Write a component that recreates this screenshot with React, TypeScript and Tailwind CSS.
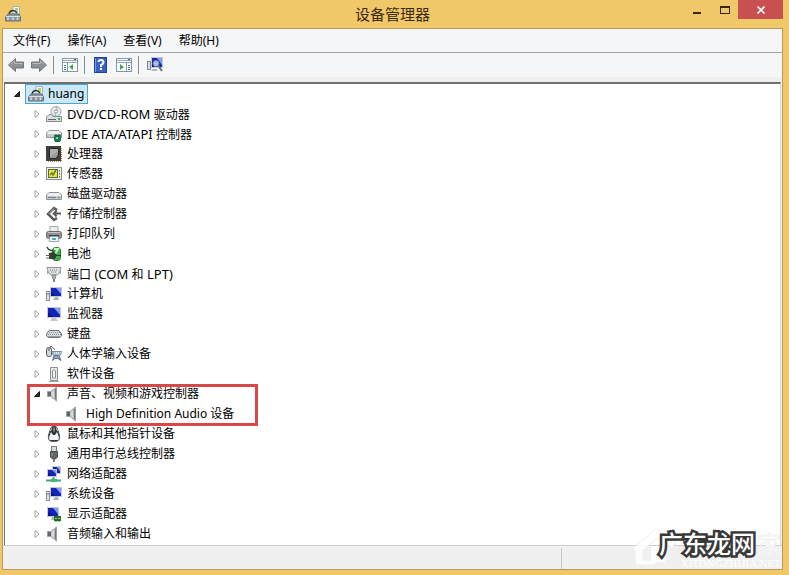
import React, { useState } from "react";

type IconName =
  | "computer" | "disc" | "ide" | "cpu" | "sensor" | "disk" | "storage" | "printer"
  | "battery" | "port" | "pc" | "monitor" | "keyboard" | "hid" | "software" | "speaker"
  | "mouse" | "usb" | "network" | "display";

function Screen({ x = 0, y = 0, w = 12, h = 9 }: { x?: number; y?: number; w?: number; h?: number }) {
  return (
    <g>
      <rect x={x} y={y} width={w} height={h} fill="#c3c9d0" />
      <rect x={x + 1} y={y + 1} width={w - 2} height={h - 2} fill="#1425b4" />
      <path d={`M${x + w / 2} ${y + 1}H${x + w - 1}V${y + h - 3}Z`} fill="#7f9cf0" />
      <path d={`M${x + 1} ${y + h - 1}V${y + h / 2}L${x + w / 2} ${y + h - 1}Z`} fill="#0b1587" />
    </g>
  );
}

function DeviceIcon({ name }: { name: IconName }) {
  const art: Record<IconName, React.ReactNode> = {
    computer: (
      <g>
        <path d="M8 .5H14.500V8H8Z" fill="#f2f5f7" stroke="#a9b4ba" />
        <rect x="10" y="2" width="3" height="4" fill="#b4cf74" />
        <path d="M4 8C5 4 9 3 12 7" fill="none" stroke="#303438" strokeWidth="1.500" />
        <path d="M3 8H14L15.500 11V15H.5V11Z" fill="#8b969d" stroke="#66727a" />
        <path d="M1 10.500H15" stroke="#dce3e7" />
        <path d="M3 11.500V14M8 11.500V14M12.500 11.500V14" stroke="#d7e5e9" strokeWidth="1.500" />
      </g>
    ),
    disc: (
      <g>
        <circle cx="10" cy="5.500" r="5" fill="#e7eaec" stroke="#9aa1a6" />
        <path d="M10 1L11.500 4.500M10 10L8.500 7" stroke="#a5adb3" />
        <circle cx="10" cy="5.500" r="1.500" fill="#fff" stroke="#8b9398" />
        <path d="M3 8.500L5 8.500L7 10.500H15.500V15.500H.5V11Z" fill="#dcdfe1" stroke="#85898d" />
        <path d="M2 13.500H10" stroke="#606468" />
        <rect x="12" y="12" width="2" height="2" fill="#35bd49" />
      </g>
    ),
    ide: (
      <g>
        <path d="M3 4.500H13L15.500 7V11.500H.5V7Z" fill="#eceeef" stroke="#8e9296" />
        <path d="M1 8H15V11H1Z" fill="#c6c9cc" />
        <rect x="8" y="9" width="7" height="6" fill="#187f51" />
        <path d="M10 8V10H13V8M9 15.500H14" fill="none" stroke="#1c533b" />
        <rect x="10" y="11" width="2" height="2" fill="#7ac9a0" />
      </g>
    ),
    cpu: (
      <g>
        <path d="M2 15.500H15M15.500 2V15" fill="none" stroke="#c4914b" strokeDasharray="1 1" />
        <rect x="0" y="0" width="15" height="15" fill="#404040" />
        <path d="M3.500 2.500H12.500V9L10 12.500H3.500Z" fill="#9a9a9a" stroke="#262626" />
        <path d="M4 3H12V5L4 11Z" fill="#b0b0b0" />
      </g>
    ),
    sensor: (
      <g>
        <rect x=".5" y="1.500" width="15" height="12" fill="#eeeee8" stroke="#8b8f8a" />
        <rect x="2.500" y="3.500" width="9" height="8" fill="#e4e43a" stroke="#5d684c" />
        <path d="M4 9L6 7L7 9L10 4" fill="none" stroke="#66803a" strokeWidth="1.500" />
        <path d="M13.500 4V5.500M13.500 7V8.500M13.500 10V11.500" stroke="#5c635e" />
      </g>
    ),
    disk: (
      <g>
        <path d="M3 6.500H13L15.500 9V13.500H.5V9Z" fill="#eceeef" stroke="#8e9296" />
        <path d="M1 10H15V13H1Z" fill="#c6c9cc" />
        <path d="M2 11.500H10" stroke="#7b7f83" />
        <rect x="12" y="11" width="2" height="1" fill="#35bd49" />
      </g>
    ),
    storage: (
      <g fill="none" stroke="#58595b">
        <path d="M11 4L8 2L2 8L8 14L11 12" strokeWidth="2.500" />
        <path d="M15 7.500H8L10.500 4.500M8 7.500L10.500 10.500" strokeWidth="2" />
        <path d="M2.500 8L8 2.500" stroke="#b3b5b6" />
      </g>
    ),
    printer: (
      <g>
        <path d="M4 .5H12V6H4Z" fill="#edf0f2" stroke="#a6a9ac" />
        <rect x=".5" y="5.500" width="15" height="7" rx="2" fill="#8f9397" stroke="#676b6f" />
        <path d="M2 6.500H14" stroke="#c4c8cc" />
        <rect x="3" y="9" width="10" height="2" fill="#3d4144" />
        <path d="M4 10.500H12L13 15.500H3Z" fill="#f3f5f6" stroke="#a0a4a7" />
        <path d="M6 13H10" stroke="#49aebe" strokeWidth="2" />
      </g>
    ),
    battery: (
      <g>
        <rect x="6.500" y="1.500" width="8" height="13" rx="3" fill="#3cb44c" stroke="#2c7338" />
        <path d="M8 3H12L9 8" stroke="#c6f2be" strokeWidth="2" fill="none" />
        <path d="M1 1C3 6 5 3 8 6" fill="none" stroke="#384b35" strokeWidth="1.500" />
        <path d="M3 7L8 6L11 9L9 13H3Z" fill="#35412e" />
        <path d="M0 9.500H4M0 12H4" stroke="#6d683c" />
        <path d="M10 9.500H15" stroke="#263b24" />
      </g>
    ),
    port: (
      <g>
        <path d="M1 1.500H15L13.500 7L10.500 9H5.500L2.500 7Z" fill="#dce0e1" stroke="#8d9598" />
        <path d="M4 4H12M5 6H11" stroke="#737c80" strokeDasharray="1 1" />
        <path d="M1.500 3V8M14.500 3V8" stroke="#a0a7a9" />
        <path d="M6 9H10L9 13H7Z" fill="#b4babc" stroke="#7f888b" />
        <path d="M8 13V16" stroke="#7f888b" strokeWidth="2" />
      </g>
    ),
    pc: (
      <g>
        <Screen x={4} y={1} w={12} h={10} />
        <path d="M9 11H12L13 14H7Z" fill="#aeb3b8" />
        <rect x=".5" y="5.500" width="3" height="9" fill="#e1e3e6" stroke="#888d93" />
        <path d="M1 8H3" stroke="#6b7b6b" />
      </g>
    ),
    monitor: (
      <g>
        <Screen x={1} y={1} w={14} h={11} />
        <path d="M6 12H10L12 15H4Z" fill="#c3c8cc" />
      </g>
    ),
    keyboard: (
      <g>
        <path d="M3 4.500H13L15.500 8V10L13.500 11.500H2.500L.5 10V8Z" fill="#d8dadc" stroke="#6f7478" />
        <path d="M3 6.500H14M2 8.500H15" stroke="#868b8f" strokeDasharray="1 1" />
        <path d="M2 10.500H14" stroke="#9a9ea2" />
      </g>
    ),
    hid: (
      <g>
        <rect x=".5" y="1.500" width="5" height="9" rx="2" fill="#d3d6d9" stroke="#555d63" />
        <path d="M3 2V5M4 1C7-1 7 4 9 3" stroke="#4e565c" fill="none" />
        <path d="M6 5.500H15.500L14.500 9H7Z" fill="#e3ebf4" stroke="#7b8795" />
        <path d="M7 7H15" stroke="#5879a0" strokeDasharray="1 1" />
        <path d="M6.500 14.500L8 9.500H13L15 14.500L12 12.500H9Z" fill="#8aa6c7" stroke="#577391" />
      </g>
    ),
    software: (
      <g>
        <path d="M4.500 1.500H11.500V14.500H4.500Z" fill="#e7eae8" stroke="#8b918d" />
        <path d="M6.500 12V5Q8 2 9.500 5V12Z" fill="#f8faf8" stroke="#83908a" />
        <path d="M3 15.500H13" stroke="#a3a8a5" />
      </g>
    ),
    speaker: (
      <g>
        <path d="M1.500 5.500H5L10.500 1V15L5 10.500H1.500Z" fill="#b5b9bd" stroke="#9a9fa3" />
        <path d="M2 6H5V10H2Z" fill="#60666c" />
        <path d="M9.500 3V13" stroke="#6c747b" />
        <path d="M5.500 6L8 4V12L5.500 10Z" fill="#d5d8da" />
      </g>
    ),
    mouse: (
      <g>
        <path d="M5 1.500C6 0 10 0 11 1.500L13.500 9C14.500 16 10 15.500 8 15.500S1.500 16 2.500 9Z" fill="#34373a" stroke="#575c60" />
        <path d="M5 6L3.500 10C2 15 5 14 8 14S14 15 12.500 10L11 6L9 9H7Z" fill="#f1f2f3" />
        <path d="M5.500 2L4.500 5M10.500 2L11.500 5" stroke="#d5d7d9" />
        <rect x="7" y="1" width="2" height="5" fill="#c9cccf" stroke="#333638" />
      </g>
    ),
    usb: (
      <g>
        <rect x="5.500" y=".5" width="5" height="5" fill="#dadddf" stroke="#777b7e" />
        <path d="M4.500 5.500H11.500V11L9.500 13H6.500L4.500 11Z" fill="#64686b" stroke="#4a4d50" />
        <path d="M6 7V10" stroke="#969a9d" />
        <path d="M8 13V16" stroke="#797d80" strokeWidth="2" />
      </g>
    ),
    network: (
      <g>
        <Screen x={6} y={0} w={9} h={8} />
        <Screen x={1} y={3} w={10} h={8} />
        <path d="M6 11H9V13H6Z" fill="#adb9bd" />
        <path d="M0 14.500H15M7.500 12V15" stroke="#46a878" strokeWidth="2" />
        <rect x="5" y="13" width="6" height="3" fill="#3fbb76" />
      </g>
    ),
    display: (
      <g>
        <Screen x={1} y={1} w={12} h={10} />
        <path d="M6 11H9V14H5Z" fill="#b4b9bd" />
        <rect x="8" y="10" width="7" height="5" fill="#246c36" />
        <path d="M9 12.500H15M9 15.500H15" stroke="#a5c467" strokeDasharray="2 1" />
      </g>
    ),
  };
  return (
    <svg className="size-4 shrink-0" viewBox="0 0 16 16" aria-hidden="true">
      {art[name]}
    </svg>
  );
}

const devices: { label: string; icon: IconName; child?: string }[] = [
  { label: "DVD/CD-ROM 驱动器", icon: "disc" },
  { label: "IDE ATA/ATAPI 控制器", icon: "ide" },
  { label: "处理器", icon: "cpu" },
  { label: "传感器", icon: "sensor" },
  { label: "磁盘驱动器", icon: "disk" },
  { label: "存储控制器", icon: "storage" },
  { label: "打印队列", icon: "printer" },
  { label: "电池", icon: "battery" },
  { label: "端口 (COM 和 LPT)", icon: "port" },
  { label: "计算机", icon: "pc" },
  { label: "监视器", icon: "monitor" },
  { label: "键盘", icon: "keyboard" },
  { label: "人体学输入设备", icon: "hid" },
  { label: "软件设备", icon: "software" },
  { label: "声音、视频和游戏控制器", icon: "speaker", child: "High Definition Audio 设备" },
  { label: "鼠标和其他指针设备", icon: "mouse" },
  { label: "通用串行总线控制器", icon: "usb" },
  { label: "网络适配器", icon: "network" },
  { label: "系统设备", icon: "pc" },
  { label: "显示适配器", icon: "display" },
  { label: "音频输入和输出", icon: "speaker" },
];

/* Latin runs are set one pixel larger than the Chinese beside them. */
function Label({ text }: { text: string }) {
  return (
    <span className="whitespace-pre">
      {text.split(/([\x20-\x7e]+)/).map((part, i) =>
        i % 2 ? <span key={i} className="text-[13px] leading-4">{part}</span> : part,
      )}
    </span>
  );
}

function Toggle({ open, label, onClick }: { open: boolean; label: string; onClick?: () => void }) {
  return (
    <button type="button" aria-label={label} aria-expanded={open} onClick={onClick} className="flex size-4 shrink-0 items-center justify-center">
      <svg className="size-2" viewBox="0 0 8 8" aria-hidden="true">
        {open ? <path d="M6.500 1.500V6.500H1.500Z" fill="#2b2b2b" stroke="#1c1c1c" /> : <path d="M2 .5L6 4L2 7.500Z" fill="#fff" stroke="#a0a0a0" />}
      </svg>
    </button>
  );
}

function DeviceRow({ label, icon, child }: { label: string; icon: IconName; child?: string }) {
  const [open, setOpen] = useState(Boolean(child));
  const row = (
    <div className="flex h-5 items-center">
      <Toggle open={open} label={label} onClick={() => setOpen(!open)} />
      <span className="ml-px flex items-center gap-[5px]">
        <DeviceIcon name={icon} />
        <Label text={label} />
      </span>
    </div>
  );
  if (!child) return <li>{row}</li>;
  return (
    <li className="relative">
      {row}
      {open && (
        <div className="ml-9 flex h-5 items-center gap-[5px]">
          <DeviceIcon name="speaker" />
          <span>{child}</span>
        </div>
      )}
      <div className="pointer-events-none absolute top-0 -bottom-0.5 -left-0.5 w-[231px] border-3 border-[#d94848]" />
    </li>
  );
}

function PanelIcon({ right }: { right?: boolean }) {
  return (
    <svg className="size-4" viewBox="0 0 16 16" aria-hidden="true">
      <rect x=".5" y="1.500" width="15" height="13" fill="#f9fbfc" stroke="#8497a5" />
      <path d="M1 3.500H15M1 5.500H15" stroke="#9baab5" />
      <path d="M12 2.500H14" stroke="#536f88" />
      <path d={right ? "M10.500 6V14" : "M5.500 6V14"} stroke="#8497a5" />
      <path d={right ? "M12 8.500H14M12 10.500H14M12 12.500H14" : "M2 8.500H4M2 10.500H4M2 12.500H4"} stroke="#4079ae" />
      <path d={right ? "M4 7V13L8 10Z" : "M11 7V13L7 10Z"} fill="#49a652" />
    </svg>
  );
}

function Arrow({ forward }: { forward?: boolean }) {
  return (
    <svg className="size-4" viewBox="0 0 16 16" aria-hidden="true">
      <path
        d={forward ? "M15.500 8L8.500 1.500V5H.5V11H8.500V14.500Z" : "M.5 8L7.500 1.500V5H15.500V11H7.500V14.500Z"}
        fill="#8f9091"
        stroke="#737577"
      />
      <path d={forward ? "M1.500 6.500H9.500V4L13 7.500" : "M2.500 7.500L6.500 4V6.500H14.500"} fill="none" stroke="#b9babb" />
    </svg>
  );
}

const menus = ["文件(F)", "操作(A)", "查看(V)", "帮助(H)"];

export default function App() {
  return (
    <div className="relative flex min-h-screen flex-col bg-[#f0c769] pr-1.5 pb-[5px] pl-0.5 font-['Noto_Sans','Noto_Sans_CJK_SC',sans-serif] text-xs text-black">
      <header className="flex h-7 items-start">
        <div className="flex h-7 flex-1 items-center">
          <span className="ml-[3px]"><DeviceIcon name="computer" /></span>
        </div>
        <h1 className="self-center font-['Noto_Sans_CJK_SC',sans-serif] text-[15px] leading-5 text-[#3b2b10]">设备管理器</h1>
        <div className="flex flex-1 justify-end">
          <button type="button" aria-label="最小化" className="flex h-[19px] w-7 items-center justify-center">
            <svg className="size-3" viewBox="0 0 12 12"><path d="M3 9H11" stroke="#352612" strokeWidth="2" /></svg>
          </button>
          <button type="button" aria-label="最大化" className="flex h-[19px] w-7 items-center justify-center">
            <svg className="size-3" viewBox="0 0 12 12">
              <rect x="2.500" y="2.500" width="9" height="7" fill="none" stroke="#352612" />
              <path d="M2 3H12" stroke="#352612" strokeWidth="2" />
            </svg>
          </button>
          <button type="button" aria-label="关闭" className="flex h-[19px] w-[45px] items-center justify-center bg-[#c75050]">
            <svg className="size-3" viewBox="0 0 12 12"><path d="M2.500 2.500L9.500 9.500M9.500 2.500L2.500 9.500" stroke="#fff" strokeWidth="1.700" /></svg>
          </button>
        </div>
      </header>

      <main className="flex flex-1 flex-col border border-[#b99a58] bg-[#f5f6f7]">
        <nav className="flex h-6 items-center gap-[17px] border-b border-[#a5a5a5] pl-2.5">
          {menus.map((m) => (
            <button type="button" key={m}>{m}</button>
          ))}
        </nav>
        <div className="flex h-6 items-center pl-[5px]">
          <button type="button" aria-label="后退"><Arrow /></button>
          <button type="button" aria-label="前进" className="ml-[7px]"><Arrow forward /></button>
          <span className="ml-1.5 h-[18px] w-px bg-[#8d8d8d]" />
          <button type="button" aria-label="显示控制台树" className="ml-2"><PanelIcon /></button>
          <span className="ml-1.5 h-[18px] w-px bg-[#8d8d8d]" />
          <button type="button" aria-label="帮助" className="ml-2">
            <svg className="size-4" viewBox="0 0 16 16" aria-hidden="true">
              <rect x="1.500" y=".5" width="12" height="15" fill="#3b61bf" stroke="#233f93" />
              <path d="M2.500 1V15" stroke="#7a9be2" />
              <path d="M5.500 5Q5.500 3 8 3T10.500 5.500Q10.500 7 8 8V10" fill="none" stroke="#fff" strokeWidth="2" />
              <rect x="7" y="11" width="2" height="2" fill="#fff" />
            </svg>
          </button>
          <button type="button" aria-label="显示操作窗格" className="ml-[7px]"><PanelIcon right /></button>
          <span className="ml-1.5 h-[18px] w-px bg-[#8d8d8d]" />
          <button type="button" aria-label="扫描检测硬件改动" className="ml-2">
            <svg className="size-4" viewBox="0 0 16 16" aria-hidden="true">
              <rect x=".5" y="4.500" width="3" height="8" fill="#d9dde1" stroke="#818890" />
              <Screen x={4} y={0} w={12} h={11} />
              <path d="M6 12H10V14H4Z" fill="#b2b8be" />
              <circle cx="9" cy="6.500" r="3" fill="#d4e5f6" fillOpacity=".8" stroke="#718396" />
              <path d="M11.500 9L15 14" stroke="#6d737a" strokeWidth="2" />
            </svg>
          </button>
        </div>
        <div className="h-[5px] bg-[#efefef]" />

        <section className="mx-px flex-1 border-t-2 border-r border-l border-t-[#707070] border-r-[#d5d5d5] border-l-[#777777] bg-white pb-px pl-1" aria-label="设备">
          <div className="flex h-5 items-center">
            <Toggle open label="huang" />
            <div className="flex h-5 items-center gap-1 border border-[#4ea6cf] bg-[#cbe8f6] px-0.5">
              <DeviceIcon name="computer" />
              <span className="pr-px">huang</span>
            </div>
          </div>
          <ul className="ml-5">
            {devices.map((d) => (
              <DeviceRow key={d.label} label={d.label} icon={d.icon} child={d.child} />
            ))}
          </ul>
        </section>
        <footer className="flex h-6 border-t border-[#cfcfcf] bg-[#f0f0f0] pt-0.5">
          <div className="flex-1 border-r border-[#c7c7c7]" />
          <div className="w-[220px]" />
        </footer>
      </main>

      <div className="pointer-events-none absolute right-2 bottom-1.5 flex items-end">
        <svg className="h-11 w-12" viewBox="0 0 48 44" aria-hidden="true">
          <path d="M1 24L25 4L45 17L41 23L26 13L12 25V35H25V40H4V25Z" fill="#fff" fillOpacity=".85" stroke="#eeeeee" />
          <path d="M20 21H34V26H26V31H34V37H20Z" fill="#fff" fillOpacity=".8" />
        </svg>
        <div className="-ml-5 flex flex-col items-end">
          <div className="flex items-center gap-0.5 font-['Noto_Sans_CJK_SC',sans-serif] text-2xl leading-7 whitespace-nowrap">
            <span className="font-medium text-white [-webkit-text-stroke:5px_#383838] [paint-order:stroke_fill]">广东龙网</span>
            <span className="font-bold text-[#f4f4f4]">家</span>
          </div>
          <span className="font-['Liberation_Serif',serif] text-[11px] leading-3 text-white">XITONGZHIJIA.NET</span>
        </div>
      </div>
    </div>
  );
}
